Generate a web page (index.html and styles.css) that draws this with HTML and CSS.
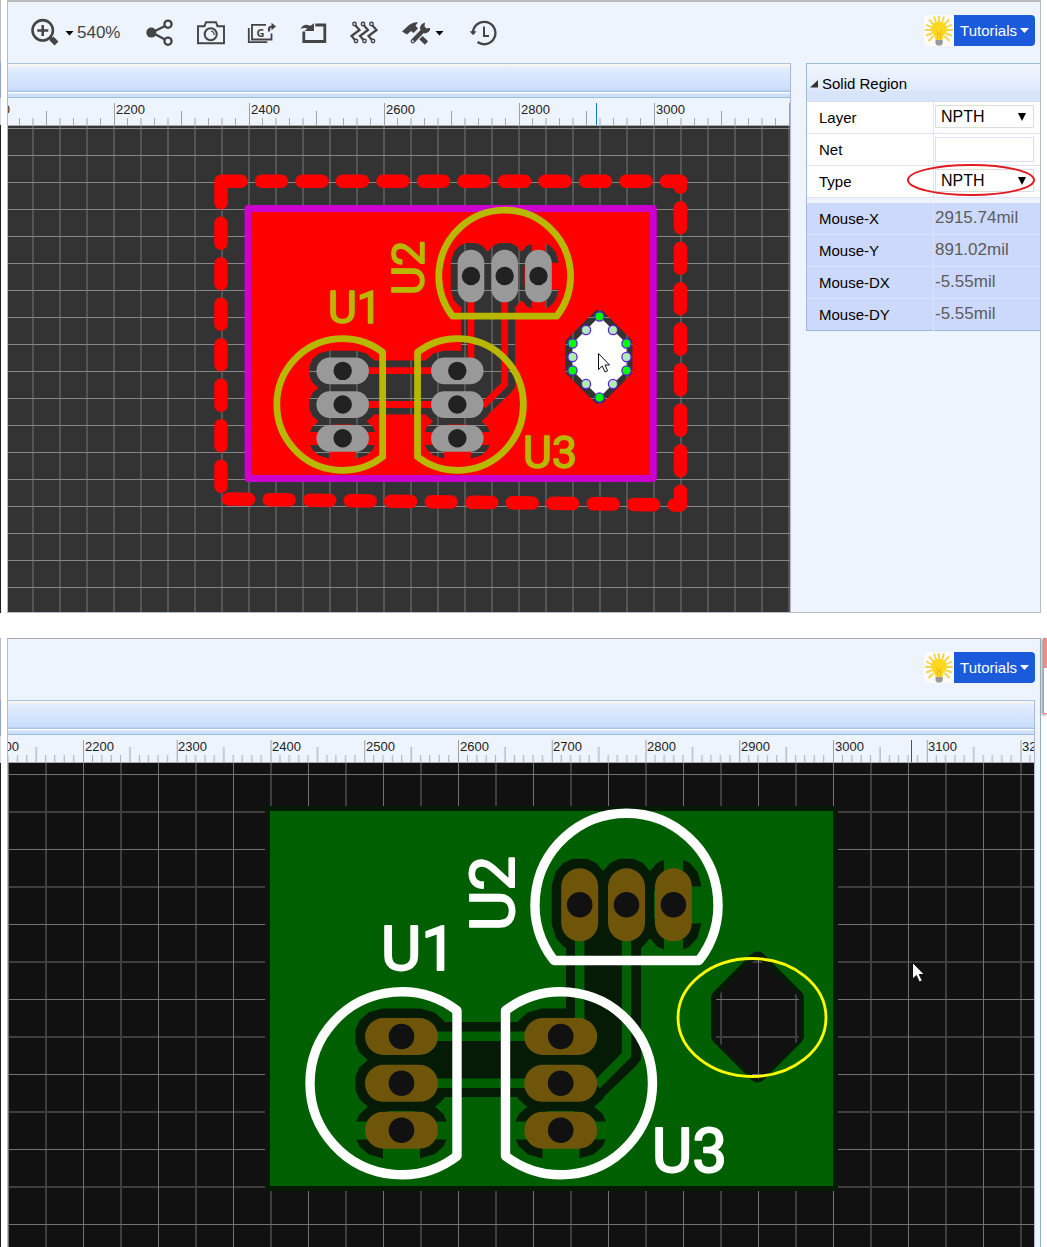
FILE: index.html
```html
<!DOCTYPE html>
<html lang="en">
<head>
<meta charset="utf-8">
<meta name="viewport" content="width=device-width, initial-scale=1">
<title>PCB Editor</title>
<link rel="stylesheet" href="styles.css">
</head>
<body>
<main class="page">
  <section class="frame">
    <div class="sliver sliver-dark"></div>
    <div class="window window-editor">
      <header class="toolbar">
        <div class="tools">
          <button class="tool tool-zoom" aria-label="Zoom">
            <svg width="30" height="30" viewBox="30 18 30 30"><circle cx="42.7" cy="30.3" r="10.2" fill="none" stroke="#444" stroke-width="2.6"/><path d="M42.7 25v11M37.3 30.4h11" stroke="#444" stroke-width="2.5"/><path d="M50 37.5l2 2" stroke="#444" stroke-width="3"/><path d="M51.5 38.5l5 5" stroke="#444" stroke-width="5.4"/></svg>
            <span class="caret caret-black"></span>
            <span class="zoom-value">540%</span>
          </button>
          <button class="tool" aria-label="Share">
            <svg width="30" height="30" viewBox="145 18 30 30"><path d="M165 26l-13 6.500l13 7" fill="none" stroke="#444" stroke-width="2.4"/><circle cx="151.300" cy="32.600" r="5" fill="#444"/><circle cx="168" cy="24.200" r="3.600" fill="none" stroke="#444" stroke-width="2.300"/><circle cx="168" cy="41.200" r="3.600" fill="none" stroke="#444" stroke-width="2.300"/></svg>
          </button>
          <button class="tool" aria-label="Capture">
            <svg width="30" height="30" viewBox="196 18 30 30"><path d="M198 26.200h6.500l1.500-4h10l1.500 4h6.500v17h-26z" fill="none" stroke="#444" stroke-width="1.900"/><circle cx="210.700" cy="34.300" r="6" fill="none" stroke="#444" stroke-width="2"/><path d="M211 31.200a3.200 3.200 0 0 1 3 3.800" fill="none" stroke="#444" stroke-width="1.200"/></svg>
          </button>
          <button class="tool" aria-label="Export Gerber">
            <svg width="30" height="30" viewBox="247 18 30 30"><path d="M248.800 28v14.200h18.500M266 24.800h-14v14.700h19.500v-6" fill="none" stroke="#444" stroke-width="1.800"/><path d="M269 31.500v-2.500q0-2.500 3.500-2.500" fill="none" stroke="#444" stroke-width="2.200"/><path d="M271.500 22.800l4.500 3.700l-4.500 3.700z" fill="#444"/><text x="256.500" y="36.500" class="glyph-g">G</text></svg>
          </button>
          <button class="tool" aria-label="Import changes">
            <svg width="30" height="30" viewBox="298 18 30 30"><path d="M303.800 31.500v10h21v-16.500h-9.500" fill="none" stroke="#444" stroke-width="2.800"/><path d="M300.500 29q3-5 7-4l3 .8l3.500-2.500v7.700h-9.500l3-2.500q-3.500-1-7 .5z" fill="#444"/></svg>
          </button>
          <button class="tool" aria-label="Route">
            <svg width="30" height="30" viewBox="350 18 30 30" fill="none" stroke="#444" stroke-width="1.400"><g id="zig"><circle cx="355.500" cy="24" r="1.700"/><path d="M356.500 25.500l4 4.500l-8 6l3.500 4" stroke-width="2.200"/><circle cx="357" cy="41" r="1.700"/></g><use href="#zig" x="8.500"/><use href="#zig" x="17"/></svg>
          </button>
          <button class="tool tool-menu" aria-label="Tools">
            <svg width="30" height="30" viewBox="400 18 30 30"><path d="M402 31.500l7-6.500q5-3.500 9-2.500l-2.500 3l2.500 3l-4.500 4.500l-2.500-2l-4 3.500z" fill="#444"/><path d="M416 33l10.500 10" stroke="#444" stroke-width="4.600"/><path d="M412.800 41.200l11-11.500" stroke="#eef4fd" stroke-width="7"/><path d="M412.800 41.200l11-11.500" stroke="#444" stroke-width="4.400" stroke-linecap="round"/><path d="M420 29q-.5-4.500 5-6.500l-.5 4l2 2l4-1q-.5 5.500-6 6z" fill="#444"/><circle cx="412.800" cy="41.200" r="1" fill="#eef4fd"/></svg>
            <span class="caret caret-black"></span>
          </button>
          <button class="tool" aria-label="History">
            <svg width="30" height="30" viewBox="471 18 30 30"><path d="M474 32.500a11.200 11.200 0 1 1 4.500 9.500" fill="none" stroke="#444" stroke-width="2.300"/><path d="M470.700 31.300h6.800l-3.300 4z" fill="#444"/><path d="M485 26.500v9.500h5" fill="none" stroke="#444" stroke-width="2"/></svg>
          </button>
        </div>
        <div class="help">
          <svg class="bulb" width="30" height="31" viewBox="0 0 30 31"><g id="bulb"><path d="M15 1v6M10 1.500l2 6M20 1.500l-2 6M5 4.500l5 5.500M25 4.500l-5 5.500M2 9.500l6 3M28 9.500l-6 3M1 15h6M29 15h-6M2 20.500l6-2M28 20.500l-6-2M4.500 26l5-5M25.500 26l-5-5" stroke="#f8d548" stroke-width="1.900"/><path d="M15 6.500a8 8 0 0 0-8 8c0 4.500 4.500 5.500 4.500 10.500h7c0-5 4.500-6 4.500-10.500a8 8 0 0 0-8-8z" fill="#fbd91f"/><path d="M12 15.500l3 4l3-4M13.500 24v-6M16.500 24v-6" fill="none" stroke="#f3b61a" stroke-width="1"/><path d="M11.500 25h7.200v3.500l-1.500 2h-4.200l-1.500-2z" fill="#9a9a9a"/></g></svg>
          <button class="tutorials">Tutorials <span class="caret"></span></button>
        </div>
      </header>
      <div class="workspace">
        <div class="editor">
          <div class="tabbar"></div>
          <svg class="ruler" aria-label="Horizontal ruler">
            <defs>
              <pattern id="ticksWide" patternUnits="userSpaceOnUse" x="114" y="0" width="135" height="200"><path d="M.500 103V125M67.500 111V125" stroke="#a0a0a4"/><path d="M13.500 118v7M27 118v7M40.500 118v7M54 118v7M81 118v7M94.500 118v7M108 118v7M121.500 118v7" stroke="#aaa" stroke-width="1"/></pattern>
            </defs>
            <g transform="translate(-8 -98)">
              <rect x="8" y="98" width="100%" height="28" fill="url(#ticksWide)"/>
              <g class="ruler-text"><text x="-19" y="114">2000</text><text x="116" y="114">2200</text><text x="251" y="114">2400</text><text x="386" y="114">2600</text><text x="521" y="114">2800</text><text x="656" y="114">3000</text></g>
              <path d="M596.500 103v23" stroke="#0a7ad0"/>
            </g>
          </svg>
          <svg class="canvas canvas-edit" role="img" aria-label="Board layout">
            <defs>
              <pattern id="gridEdit" patternUnits="userSpaceOnUse" x="248" y="209" width="27" height="27"><path d="M1 0v27" stroke="#555" stroke-width="2"/><path d="M0 .500h27" stroke="#868686"/></pattern>
              <g id="padH"><rect x="-36.500" y="-18.500" width="73" height="37" rx="18.500" class="pad"/><circle r="12.800" class="drill"/></g>
              <g id="padV"><rect x="-18.500" y="-36.500" width="37" height="73" rx="18.500" class="pad"/><circle r="12.800" class="drill"/></g>
              <g id="clearH"><path d="M-19-28h38l14 4l9 8l4 9v14l-4 9l-9 8l-14 4h-38l-14-4l-9-8l-4-9v-14l4-9l9-8z"/></g>
              <g id="clearV"><path d="M-28-19l4-14l8-9l9-4h14l9 4l8 9l4 14v38l-4 14l-8 9l-9 4h-14l-9-4l-8-9l-4-14z"/></g>
              <mask id="pour" maskUnits="userSpaceOnUse" x="-10" y="-10" width="600" height="400">
                <rect x="-10" y="-10" width="600" height="400" fill="#fff"/>
                <g fill="#000">
                  <use href="#clearH" x="131.500" y="225.500"/><use href="#clearH" x="131.500" y="272.300"/><use href="#clearH" x="131.500" y="319.200"/>
                  <use href="#clearH" x="290.700" y="225.500"/><use href="#clearH" x="290.700" y="272.300"/><use href="#clearH" x="290.700" y="319.200"/>
                  <use href="#clearV" x="309.700" y="93.800"/><use href="#clearV" x="356.500" y="93.800"/><use href="#clearV" x="403.400" y="93.800"/>
                  <rect x="160" y="211" width="102" height="75"/>
                  <path d="M296 128h75v120l-5 7l-42 40h-34v-90h6z"/>
                  <path d="M487.500 149l38 38v38l-38 38l-38-38v-38z" stroke="#000" stroke-width="17" stroke-linejoin="round"/>
                </g>
                <g fill="#fff">
                  <path d="M80 310.500h103v18h-103zM113 319h37v30h-37zM239 310.500h103v18h-103zM272.500 319h37v30h-37z"/>
                  <path d="M394 45h19v97h-19zM403 75.500h30v37h-30z"/>
                  <path d="M118 300h27v3h-27zM277 300h27v3h-27zM384 80h3v27h-3z"/>
                  <path d="M131 220.500h160v9.500h-160zM131 267.500h160v9.500h-160z"/>
                  <path d="M309.700 93v132M356.500 93v151l-30 30" fill="none" stroke="#fff" stroke-width="9.400"/>
                </g>
              </mask>
              <rect id="copper" width="563" height="375" mask="url(#pour)"/>
              <g id="pads">
                <use href="#padH" x="131.500" y="225.500"/><use href="#padH" x="131.500" y="272.300"/><use href="#padH" x="131.500" y="319.200"/>
                <use href="#padH" x="290.700" y="225.500"/><use href="#padH" x="290.700" y="272.300"/><use href="#padH" x="290.700" y="319.200"/>
                <use href="#padV" x="309.700" y="93.800"/><use href="#padV" x="356.500" y="93.800"/><use href="#padV" x="403.400" y="93.800"/>
              </g>
              <g id="silk" fill="none" stroke-width="9.400" stroke-linejoin="round">
                <path d="M187 199.500A91.500 91.500 0 1 0 187 345z"/>
                <path d="M235.500 199.500A91.500 91.500 0 1 1 235.500 345z"/>
                <path d="M284 149.500A91.500 91.500 0 1 1 429 149.500z"/>
              </g>
            </defs>
            <g transform="translate(-8 -126)">
              <rect x="8" y="126" width="100%" height="486" fill="#333"/>
              <rect x="8" y="126" width="100%" height="486" fill="url(#gridEdit)"/>
              <path d="M221 181.300H680.500V505L221 499z" fill="none" stroke="#f00" stroke-width="13.500" stroke-linecap="round" stroke-linejoin="round" stroke-dasharray="20 20.500"/>
              <g transform="translate(248 208.500) scale(.72)" class="board-edit">
                <use href="#copper"/>
                <rect width="563" height="375" fill="none" stroke="#c0c" stroke-width="9.400" stroke-linejoin="round"/>
                <use href="#pads"/><use href="#silk" class="silk"/>
                <g class="ref"><text x="111" y="159">U1</text><text transform="translate(244 120) rotate(-90)">U2</text><text x="382" y="361">U3</text></g>
              </g>
              <path d="M599.500 316.500l27 27v27l-27 27l-27-27v-27z" fill="#fff" stroke="#999" stroke-dasharray="4 2"/>
              <g stroke="#5a1fe0" stroke-width="1.300">
                <g fill="#0f0"><circle cx="599.500" cy="316.500" r="4.600"/><circle cx="626.500" cy="343.500" r="4.600"/><circle cx="626.500" cy="370.500" r="4.600"/><circle cx="599.500" cy="397.500" r="4.600"/><circle cx="572.500" cy="370.500" r="4.600"/><circle cx="572.500" cy="343.500" r="4.600"/></g>
                <g fill="#b0ecb0"><circle cx="613" cy="330" r="4.600"/><circle cx="626.500" cy="357" r="4.600"/><circle cx="613" cy="384" r="4.600"/><circle cx="586" cy="384" r="4.600"/><circle cx="572.500" cy="357" r="4.600"/><circle cx="586" cy="330" r="4.600"/></g>
              </g>
              <path d="M598.500 353.500v16l3.800-3.500l2.700 6l2.600-1.200l-2.600-5.800h4.500z" fill="#fff" stroke="#111"/>
            </g>
          </svg>
        </div>
        <aside class="side">
          <form class="props">
            <h2 class="props-title"><svg width="8" height="8" viewBox="0 0 8 8"><path d="M8 0v7.500H0z" fill="#333"/></svg>Solid Region</h2>
            <div class="row"><label for="layer">Layer</label><div class="value"><span class="pick"><select id="layer"><option>NPTH</option></select></span></div></div>
            <div class="row"><label for="net">Net</label><div class="value"><input id="net" type="text"></div></div>
            <div class="row"><label for="type">Type</label><div class="value"><span class="pick"><select id="type"><option>NPTH</option></select></span>
              <svg class="marker" width="130" height="34" viewBox="0 0 130 34"><ellipse cx="65" cy="17" rx="63" ry="15" fill="none" stroke="#e11b22" stroke-width="2"/></svg></div></div>
            <dl class="mouse">
              <div class="row"><dt>Mouse-X</dt><dd>2915.74mil</dd></div>
              <div class="row"><dt>Mouse-Y</dt><dd>891.02mil</dd></div>
              <div class="row"><dt>Mouse-DX</dt><dd>-5.55mil</dd></div>
              <div class="row"><dt>Mouse-DY</dt><dd>-5.55mil</dd></div>
            </dl>
          </form>
        </aside>
      </div>
    </div>
    <div class="gutter"></div>
  </section>

  <section class="frame">
    <div class="sliver"></div>
    <div class="window window-preview">
      <header class="toolbar">
        <div class="tools"></div>
        <div class="help">
          <svg class="bulb" width="30" height="31" viewBox="0 0 30 31"><use href="#bulb"/></svg>
          <button class="tutorials">Tutorials <span class="caret"></span></button>
        </div>
      </header>
      <div class="preview">
        <div class="tabbar"></div>
        <svg class="ruler" aria-label="Horizontal ruler">
          <defs>
            <pattern id="ticksFine" patternUnits="userSpaceOnUse" x="83" y="0" width="93.750" height="1000"><path d="M.500 740v22M47 747v15" stroke="#a0a0a4"/><path d="M9.500 755v7M18.800 755v7M28.200 755v7M37.500 755v7M56.500 755v7M65.500 755v7M75 755v7M84.500 755v7" stroke="#aaa"/></pattern>
          </defs>
          <g transform="translate(-8 -735)">
            <rect x="8" y="735" width="100%" height="28" fill="url(#ticksFine)"/>
            <g class="ruler-text"><text x="-10" y="751">2100</text><text x="85" y="751">2200</text><text x="178" y="751">2300</text><text x="272" y="751">2400</text><text x="366" y="751">2500</text><text x="460" y="751">2600</text><text x="553" y="751">2700</text><text x="647" y="751">2800</text><text x="741" y="751">2900</text><text x="835" y="751">3000</text><text x="928" y="751">3100</text><text x="1022" y="751">3200</text></g>
            <path d="M911.500 740v23" stroke="#0a62b0"/>
          </g>
        </svg>
        <svg class="canvas canvas-preview" role="img" aria-label="Board preview">
          <defs>
            <pattern id="gridPreview" patternUnits="userSpaceOnUse" x="8" y="774" width="75" height="75"><rect width="75" height="75" fill="#111"/><path d="M38 0v75M0 38h75" stroke="#3e3e3e" stroke-width="2"/><path d="M.500 0v75M0 .500h75" stroke="#727272"/></pattern>
          </defs>
          <g transform="translate(-8 -763)">
            <rect x="8" y="763" width="100%" height="484" fill="url(#gridPreview)"/>
            <rect x="265" y="806" width="573" height="385" fill="#061b06"/>
            <g transform="translate(270 811)" class="board-preview">
              <use href="#copper"/><use href="#pads"/><use href="#silk" class="silk"/>
              <g class="ref"><text x="111" y="159">U1</text><text transform="translate(244 120) rotate(-90)">U2</text><text x="382" y="361">U3</text></g>
            </g>
            <path d="M757.500 957l42 40v43l-42 40l-42-40v-43z" fill="url(#gridPreview)" stroke="#111" stroke-width="1"/>
            <ellipse cx="752" cy="1017.500" rx="74" ry="59" fill="none" stroke="#ff0" stroke-width="2.800"/>
            <path d="M912.500 962.500v16.500l3.800-3.500l3 6.500l3-1.300l-3-6.200h5z" fill="#fff" stroke="#111"/>
          </g>
        </svg>
      </div>
    </div>
    <div class="gutter gutter-dialog"><div class="dialog-edge"></div></div>
  </section>
</main>
</body>
</html>
```
FILE: styles.css
```css
* { box-sizing: border-box; }

body {
  margin: 0;
  background: #fff;
  color: #000;
  font-family: "Liberation Sans", Arial, sans-serif;
  font-size: 15px;
}

button, select, input { font: inherit; }

svg { display: block; }

.page { display: flex; flex-direction: column; gap: 25px; }

.frame { display: flex; }

.sliver {
  flex: none;
  width: 1px;
  margin-right: 6px;
  background: linear-gradient(#b8bcc8 62px, #90a4c4 62px, #90a4c4 98px, #d0dae8 98px, #d0dae8 125px, #222 125px);
}

.window {
  flex: 1;
  min-width: 0;
  background: #eef4fd;
  border-left: 1px solid #b9bbc4;
}

.window-editor {
  border-top: 2px solid #bbb;
  border-right: 1px solid #b4bac8;
  border-bottom: 1px solid #b4bac8;
}

.window-preview {
  border-top: 1px solid #a9a9b0;
  border-right: 1px solid #8fb0c4;
}

.gutter { flex: none; width: 6px; }

.gutter-dialog { padding-left: 2px; }

.dialog-edge {
  height: 76px;
  border-left: 1px solid #e88a8a;
  border-bottom: 1px solid #e88a8a;
  background: linear-gradient(#ec8c8c 30px, #fff 30px);
  box-shadow: -1px 1px 3px #888;
}

.toolbar {
  display: flex;
  justify-content: space-between;
  height: 61px;
  padding: 13px 5px 0 22px;
}

.tools { display: flex; align-items: center; gap: 21px; height: 36px; }

.tool {
  display: flex;
  align-items: center;
  width: 30px;
  height: 30px;
  padding: 0;
  border: 0;
  background: none;
}

.tool svg { flex: none; }

.tool-zoom { width: 94px; }

.tool-menu { width: 49px; }

.tool .caret { margin: 0 3px 0 5px; }

.caret {
  flex: none;
  width: 9px;
  height: 5px;
  background: #fff;
  clip-path: polygon(0 0, 100% 0, 50% 100%);
}

.caret-black { background: #000; }

.zoom-value { color: #444; font-size: 17px; line-height: 20px; }

.glyph-g { font: bold 11px "Noto Sans", sans-serif; fill: #444; }

.help { display: flex; height: 31px; }

.bulb { background: #fdfafa; border-radius: 4px 0 0 4px; }

.tutorials {
  display: flex;
  align-items: center;
  gap: 3px;
  height: 31px;
  padding: 0 6px;
  border: 0;
  border-radius: 0 4px 4px 0;
  background: #1b5bdb;
  color: #fff;
}

.workspace { display: flex; gap: 15px; }

.editor {
  flex: 1;
  min-width: 0;
  border-right: 1px solid #a9b8dc;
}

.preview {
  margin-right: 5px;
  border-right: 1px solid #a9b8dc;
}

.tabbar {
  height: 35px;
  border-top: 1px solid #a9c3da;
  border-bottom: 1px solid #9bbfd8;
  background: linear-gradient(#f8f6f2 2px, #e4eefc 3px, #c9ddfc 26px, #a9c6e8 27px, #a9c6e8 28px, #fff 28px, #fff 29px, #cde0fb 30px);
}

.ruler { width: 100%; height: 28px; border-bottom: 1px solid #aaa; }

.ruler-text { font-size: 13px; fill: #222; }

.canvas { width: 100%; }

.canvas-edit { height: 486px; background: #333; }

.canvas-preview { height: 484px; background: #111; }

.board-edit { --pad: #999; --drill: #222; --ink: #b8b800; fill: #f00; }

.board-preview { --pad: #6f550a; --drill: #111; --ink: #fff; fill: #005f00; }

.silk { stroke: var(--ink); }

.pad { fill: var(--pad); }

.drill { fill: var(--drill); }

.ref {
  font: 62px Roboto, sans-serif;
  fill: var(--ink);
  stroke: var(--ink);
  stroke-width: 2px;
  stroke-linejoin: round;
}

.side { flex: none; width: 234px; }

.props {
  border: 1px solid #9bbbd8;
  border-right: 0;
}

.props-title {
  display: flex;
  align-items: center;
  gap: 4px;
  height: 38px;
  margin: 0;
  padding: 2px 3px 0;
  border-bottom: 1px solid #d4e0f8;
  background: linear-gradient(#f2f7fe, #dfe9fc 27px, #d8e4fa 27px);
  font-size: 15px;
  font-weight: normal;
}

.row {
  display: grid;
  grid-template-columns: 126px 1fr;
  height: 32px;
  border-bottom: 1px solid #dde4f8;
  background: #fff;
}

.row label, .row dt { padding: 0 12px; line-height: 32px; }

.value {
  position: relative;
  padding: 3px 6px 0 1px;
  border-left: 1px solid #dde4f8;
}

.pick { position: relative; display: block; }

.pick::after {
  content: "";
  position: absolute;
  top: 8px;
  right: 8px;
  width: 8px;
  height: 8px;
  background: #000;
  clip-path: polygon(0 0, 100% 0, 50% 100%);
  pointer-events: none;
}

.value select {
  display: block;
  appearance: none;
  width: 100%;
  height: 23px;
  padding: 0 5px;
  border: 1px solid #ddd;
  border-radius: 0;
  background: #fff;
  color: #000;
  font-size: 16px;
}

.value input {
  display: block;
  width: 100%;
  height: 25px;
  border: 1px solid #dcdcf8;
  background: #fff;
}

.marker { position: absolute; top: -3px; right: 4px; pointer-events: none; }

.mouse { margin: 0; padding-top: 5px; }

.mouse .row { background: #ccd9fc; border-color: #d8e4fb; }

.mouse .row:last-child { border-bottom: 0; height: 31px; }

.mouse dd {
  margin: 0;
  padding-left: 1px;
  border-left: 1px solid #d8e4fb;
  color: #5c5c5c;
  font-size: 17px;
  line-height: 30px;
}
```
